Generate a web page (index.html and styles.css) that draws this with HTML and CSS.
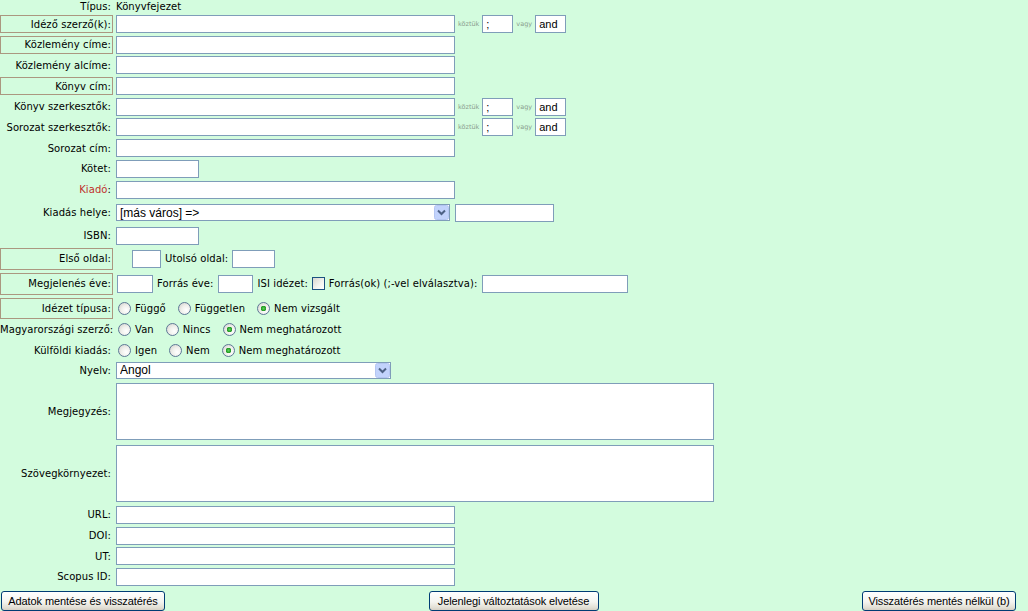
FILE: index.html
```html
<!DOCTYPE html>
<html lang="hu">
<head>
<meta charset="utf-8">
<title>Idézet szerkesztése</title>
<link rel="stylesheet" href="styles.css">
</head>
<body>
<form class="form">
  <div class="row r-tipus"><div class="lab">Típus:</div><div class="val">Könyvfejezet</div></div>

  <div class="row"><div class="lab box">Idéző szerző(k):</div>
    <div class="val tight"><input class="in w339"><span class="tiny">köztük</span><input class="in w31" value=";"><span class="tiny">vagy</span><input class="in w31" value="and"></div></div>

  <div class="row"><div class="lab box">Közlemény címe:</div><div class="val"><input class="in w339"></div></div>
  <div class="row"><div class="lab">Közlemény alcíme:</div><div class="val"><input class="in w339"></div></div>
  <div class="row"><div class="lab box">Könyv cím:</div><div class="val"><input class="in w339"></div></div>

  <div class="row"><div class="lab">Könyv szerkesztők:</div>
    <div class="val tight"><input class="in w339"><span class="tiny">köztük</span><input class="in w31" value=";"><span class="tiny">vagy</span><input class="in w31" value="and"></div></div>

  <div class="row"><div class="lab">Sorozat szerkesztők:</div>
    <div class="val tight"><input class="in w339"><span class="tiny">köztük</span><input class="in w31" value=";"><span class="tiny">vagy</span><input class="in w31" value="and"></div></div>

  <div class="row"><div class="lab">Sorozat cím:</div><div class="val"><input class="in w339"></div></div>
  <div class="row"><div class="lab">Kötet:</div><div class="val"><input class="in w83"></div></div>
  <div class="row"><div class="lab"><span class="red">Kiadó</span>:</div><div class="val"><input class="in w339"></div></div>

  <div class="row r-kiadas"><div class="lab">Kiadás helye:</div>
    <div class="val gap5">
      <span class="selwrap w334"><select class="sel"><option>[más város] =&gt;</option></select><svg class="arrow" width="15" height="15" viewBox="0 0 15 15"><rect x="0.5" y="0.5" width="14" height="14" rx="2" fill="#c2d3fc" stroke="#b4c6f2"/><path d="M4 5.5 L7.5 9 L11 5.5" fill="none" stroke="#4d6185" stroke-width="2"/></svg></span>
      <input class="in w99">
    </div></div>

  <div class="row r-isbn"><div class="lab">ISBN:</div><div class="val"><input class="in w83"></div></div>

  <div class="row r-box22"><div class="lab box">Első oldal:</div>
    <div class="val"><input class="in w29 off16"><span>Utolsó oldal:</span><input class="in w43"></div></div>

  <div class="row r-box22"><div class="lab box">Megjelenés éve:</div>
    <div class="val"><input class="in w36 off1"><span>Forrás éve:</span><input class="in w35"><span class="ml1">ISI idézet:</span><input type="checkbox" class="chk"><span>Forrás(ok) (;-vel elválasztva):</span><input class="in w146 ml1"></div></div>

  <div class="row r-idezet"><div class="lab box">Idézet típusa:</div>
    <div class="val radios">
      <label class="opt"><input type="radio" name="it" class="rad">Függő</label>
      <label class="opt"><input type="radio" name="it" class="rad">Független</label>
      <label class="opt"><input type="radio" name="it" class="rad" checked>Nem vizsgált</label>
    </div></div>

  <div class="row r-radio"><div class="lab">Magyarországi szerző:</div>
    <div class="val radios">
      <label class="opt"><input type="radio" name="ms" class="rad">Van</label>
      <label class="opt"><input type="radio" name="ms" class="rad">Nincs</label>
      <label class="opt"><input type="radio" name="ms" class="rad" checked>Nem meghatározott</label>
    </div></div>

  <div class="row r-radio"><div class="lab">Külföldi kiadás:</div>
    <div class="val radios">
      <label class="opt"><input type="radio" name="kk" class="rad">Igen</label>
      <label class="opt"><input type="radio" name="kk" class="rad">Nem</label>
      <label class="opt"><input type="radio" name="kk" class="rad" checked>Nem meghatározott</label>
    </div></div>

  <div class="row r-nyelv"><div class="lab">Nyelv:</div>
    <div class="val">
      <span class="selwrap w275"><select class="sel"><option>Angol</option></select><svg class="arrow" width="15" height="15" viewBox="0 0 15 15"><rect x="0.5" y="0.5" width="14" height="14" rx="2" fill="#c2d3fc" stroke="#b4c6f2"/><path d="M4 5.5 L7.5 9 L11 5.5" fill="none" stroke="#4d6185" stroke-width="2"/></svg></span>
    </div></div>

  <div class="row r-ta"><div class="lab">Megjegyzés:</div><div class="val"><textarea class="ta"></textarea></div></div>
  <div class="row r-ta2"><div class="lab">Szövegkörnyezet:</div><div class="val"><textarea class="ta"></textarea></div></div>

  <div class="row"><div class="lab">URL:</div><div class="val"><input class="in w339"></div></div>
  <div class="row"><div class="lab">DOI:</div><div class="val"><input class="in w339"></div></div>
  <div class="row"><div class="lab">UT:</div><div class="val"><input class="in w339"></div></div>
  <div class="row r-last"><div class="lab">Scopus ID:</div><div class="val"><input class="in w339"></div></div>

  <div class="buttons">
    <button type="button" class="btn b1">Adatok mentése és visszatérés</button>
    <button type="button" class="btn b2">Jelenlegi változtatások elvetése</button>
    <button type="button" class="btn b3">Visszatérés mentés nélkül (b)</button>
  </div>
</form>
</body>
</html>
```

FILE: styles.css
```css
html, body {
  margin: 0;
  padding: 0;
}
body {
  background: #d3fcde;
  font-family: "DejaVu Sans", Verdana, sans-serif;
  font-size: 10px;
  letter-spacing: 0.08px;
  color: #000;
  width: 1028px;
  height: 611px;
  overflow: hidden;
}
.form {
  display: flex;
  flex-direction: column;
}
.row {
  display: grid;
  grid-template-columns: 113px 1fr;
  column-gap: 3px;
  height: 18px;
  margin-bottom: 2.7px;
  align-items: center;
}
.r-tipus { height: 13px; margin-bottom: 2px; }
.r-kiadas { height: 23px; }
.r-isbn { margin-bottom: 3px; }
.r-box22 { height: 22px; margin-bottom: 3px; }
.r-idezet { height: 21px; margin-bottom: 1px; }
.r-radio { height: 20px; margin-bottom: 1px; }
.r-nyelv { height: 17px; margin-bottom: 4px; }
.r-ta { height: 57px; margin-bottom: 5px; }
.r-ta2 { height: 57px; margin-bottom: 4px; }
.r-last { margin-bottom: 4.9px; }

.lab {
  text-align: right;
  white-space: nowrap;
  padding-right: 2px;
}
.box {
  box-sizing: border-box;
  height: 100%;
  border: 1px solid #ab9780;
  padding-right: 1px;
  display: flex;
  align-items: center;
  justify-content: flex-end;
}
.red { color: #c0302c; }
.val {
  display: flex;
  align-items: center;
  gap: 4px;
  height: 100%;
  white-space: nowrap;
}
.tight { gap: 3px; }
.gap5 { gap: 5px; }
.tiny {
  font-family: "DejaVu Sans", Verdana, sans-serif;
  font-size: 6.5px;
  letter-spacing: 0;
  color: #8a9d8e;
}
.in {
  box-sizing: border-box;
  height: 18px;
  margin: 0;
  padding: 0 3px;
  border: 1px solid #7f9db9;
  background: #fff;
  font: 11px "Liberation Sans", Arial, sans-serif;
  color: #000;
  outline: none;
}
.w339 { width: 339px; }
.w31 { width: 31px; }
.w83 { width: 83px; }
.w99 { width: 99px; }
.w29 { width: 29px; }
.w43 { width: 43px; }
.w36 { width: 36px; }
.w35 { width: 35px; }
.w146 { width: 146px; }
.off16 { margin-left: 16px; }
.off1 { margin-left: 1px; }
.ml1 { margin-left: 1px; }

.selwrap {
  position: relative;
  display: inline-block;
  height: 17px;
}
.w334 { width: 334px; }
.w275 { width: 275px; }
.sel {
  appearance: none;
  -webkit-appearance: none;
  box-sizing: border-box;
  width: 100%;
  height: 17px;
  margin: 0;
  padding: 0 0 0 3px;
  border: 1px solid #7f9db9;
  border-radius: 0;
  background: #fff;
  font: 12px "Liberation Sans", Arial, sans-serif;
  letter-spacing: 0;
  color: #000;
  outline: none;
}
.arrow {
  position: absolute;
  right: 1px;
  top: 1px;
  pointer-events: none;
}

.chk {
  appearance: none;
  -webkit-appearance: none;
  box-sizing: border-box;
  width: 13px;
  height: 13px;
  margin: 0;
  border: 1px solid #1c5180;
  background: linear-gradient(135deg, #d8d7d0, #f4f4f0 60%, #fff);
}

.radios { gap: 0; padding-left: 2px; }
.opt {
  display: flex;
  align-items: center;
  gap: 4px;
  margin-right: 12px;
}
.rad {
  appearance: none;
  -webkit-appearance: none;
  box-sizing: border-box;
  width: 13px;
  height: 13px;
  margin: 0;
  border: 1px solid #5d7896;
  border-radius: 50%;
  background: radial-gradient(circle at 65% 65%, #ffffff 0, #f0f0ec 45%, #cfcec8 100%);
}
.rad:checked {
  background:
    radial-gradient(circle, #5fd05f 0, #2aa52a 2px, #1f8f1f 2.6px, transparent 3px),
    radial-gradient(circle at 65% 65%, #ffffff 0, #f0f0ec 45%, #cfcec8 100%);
}

.ta {
  box-sizing: border-box;
  width: 598px;
  height: 57px;
  margin: 0;
  padding: 2px;
  border: 1px solid #7f9db9;
  background: #fff;
  resize: none;
  outline: none;
  font: 12px "Liberation Sans", Arial, sans-serif;
}

.buttons {
  display: flex;
  justify-content: space-between;
  padding: 0 12px 0 1px;
  height: 20px;
}
.btn {
  box-sizing: border-box;
  height: 20px;
  margin: 0;
  padding: 0;
  border: 1px solid #003c74;
  border-radius: 3px;
  background: linear-gradient(#ffffff, #f4f4f0 55%, #e3e0d6 85%, #d6d0c5);
  font: 11px "Liberation Sans", Arial, sans-serif;
  letter-spacing: -0.1px;
  color: #000;
  text-align: center;
}
.b1 { width: 164px; }
.b2 { width: 170px; }
.b3 { width: 154px; }
```
